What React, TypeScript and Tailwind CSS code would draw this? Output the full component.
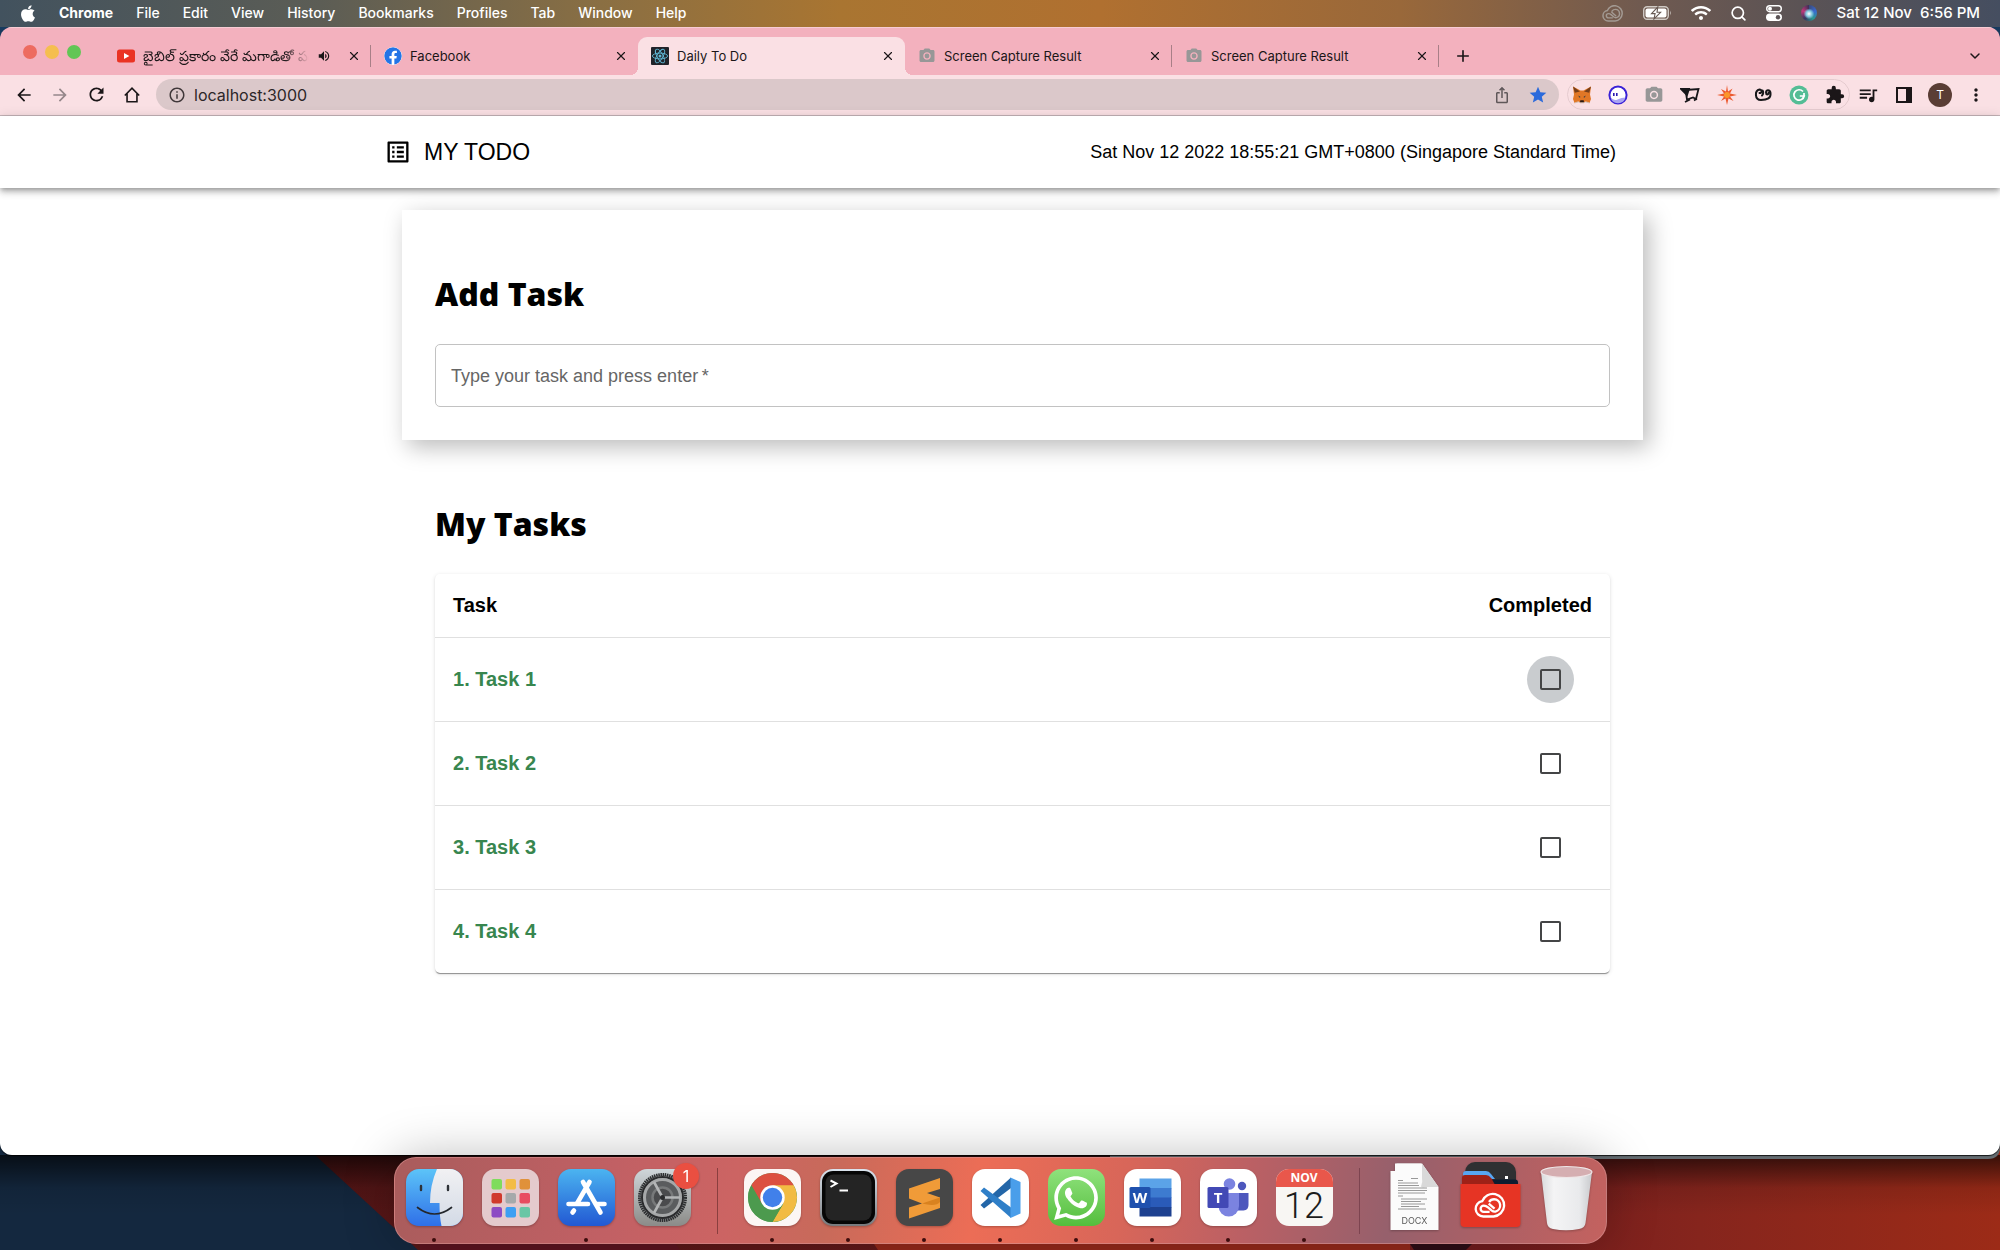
import { ReactNode, useState } from "react";
import { FaApple, FaFacebook, FaWhatsapp, FaWifi } from "react-icons/fa";
import {
  MdArrowBack,
  MdArrowForward,
  MdCameraAlt,
  MdExtension,
  MdInfoOutline,
  MdIosShare,
  MdListAlt,
  MdMoreVert,
  MdOutlineHome,
  MdQueueMusic,
  MdRefresh,
  MdStar,
  MdVolumeUp,
} from "react-icons/md";
import { ChevronDown, Plus, Search, X } from "lucide-react";

const menus = ["File", "Edit", "View", "History", "Bookmarks", "Profiles", "Tab", "Window", "Help"];

const tasks = ["Task 1", "Task 2", "Task 3", "Task 4"];

function CreativeCloud({ className }: { className?: string }) {
  return (
    <svg viewBox="0 0 36 28" fill="none" stroke="currentColor" strokeWidth="2.4" strokeLinecap="round" className={className}>
      <path d="M10 26.300 A8.600 8.600 0 0 1 8.800 9.200 A12.600 12.600 0 1 1 21.500 26.300 Z" />
      <path d="M17 21.200 H10.500 a3.500 3.500 0 0 1 0-7 c2.200 0 3.400 .8 4.800 2 l4.200 3.600 c1.400 1.100 2.600 1.300 4 1 a6.900 6.900 0 0 0 -1.500-13.600 c-2.600 0-4.400 1.200-5.600 3" />
      <path d="M16 12 l6.500 5.600" />
    </svg>
  );
}

function MenuBar() {
  return (
    <header className="flex h-[27px] items-center justify-between bg-[linear-gradient(to_right,#42525e_0%,#5c5d55_16%,#8a6f43_30%,#a97531_42%,#b07030_55%,#99683a_70%,#705a50_82%,#5b5355_90%,#454e60_100%)] px-5 pb-px font-[Inter,sans-serif] text-[14px] leading-5 font-medium text-white">
      <nav className="flex items-center gap-[23px]">
        <FaApple className="h-[19px] w-4" />
        <button className="font-bold">Chrome</button>
        {menus.map((menu) => (
          <button key={menu}>{menu}</button>
        ))}
      </nav>
      <div className="flex items-center gap-[19px]">
        <CreativeCloud className="h-[17px] w-[22px] text-[#a39a93]" />
        <svg viewBox="0 0 29 14" className="h-[14px] w-[29px]">
          <rect x="0.7" y="0.7" width="24.6" height="12.6" rx="3.5" fill="none" stroke="#cfc9c4" strokeWidth="1.4" />
          <rect x="2.5" y="2.5" width="21" height="9" rx="2" fill="#fff" />
          <path d="M27 4.5 q1.6 2.5 0 5z" fill="#cfc9c4" />
          <path d="M14.8 1 L8.5 7.6 h3.6 L11 13 L17.6 6.3 h-3.6 z" fill="#fff" stroke="#675953" strokeWidth="1.1" />
        </svg>
        <FaWifi className="h-[18px] w-5" />
        <Search className="size-[17px]" strokeWidth={2.4} />
        <svg viewBox="0 0 16 16" className="size-4">
          <rect x="0.7" y="0.7" width="14.6" height="6" rx="3" fill="none" stroke="#fff" strokeWidth="1.4" />
          <circle cx="4" cy="3.7" r="2" fill="#fff" />
          <rect x="0" y="8.6" width="16" height="7.4" rx="3.7" fill="#fff" />
          <circle cx="12" cy="12.3" r="2.2" fill="#5b5355" />
        </svg>
        <span className="size-4 rounded-full bg-[radial-gradient(circle_at_50%_55%,#fff_0,#7fc6dd_25%,transparent_45%),conic-gradient(#3b4a7a,#3a6ad0,#2b9a90,#35365f,#c0397a,#3b2f55)]" />
        <span className="text-[15px] whitespace-pre">Sat 12 Nov  6:56 PM</span>
      </div>
    </header>
  );
}

function CameraFavicon() {
  return <MdCameraAlt className="size-[18px] shrink-0 text-[#979797]" />;
}

function Tab({ icon, title, active, divider, playing }: { icon: ReactNode; title: string; active?: boolean; divider?: boolean; playing?: boolean }) {
  return (
    <div
      className={
        active
          ? "relative flex h-[38px] max-w-[267px] min-w-0 flex-1 items-center rounded-t-[9px] bg-[#fae0e4] pr-[10px] pl-[13px] before:absolute before:bottom-0 before:-left-2 before:size-2 before:bg-[radial-gradient(circle_at_0_0,transparent_8px,#fae0e4_8px)] after:absolute after:-right-2 after:bottom-0 after:size-2 after:bg-[radial-gradient(circle_at_100%_0,transparent_8px,#fae0e4_8px)]"
          : "relative flex h-[38px] max-w-[267px] min-w-0 flex-1 items-center pr-[10px] pl-[13px]"
      }
    >
      {icon}
      <span
        className={
          playing
            ? "ml-2 min-w-0 flex-1 overflow-hidden py-1 text-[14px] whitespace-nowrap [mask-image:linear-gradient(to_right,black_85%,transparent)]"
            : "ml-2 min-w-0 flex-1 truncate"
        }
      >
        {title}
      </span>
      {playing && <MdVolumeUp className="mr-4 ml-2 size-[14px] shrink-0" />}
      <button aria-label="Close tab">
        <X className="size-[14px]" strokeWidth={2} />
      </button>
      {divider && <span className="absolute right-0 h-[22px] w-px bg-[#a87f87]" />}
    </div>
  );
}

function TabStrip() {
  return (
    <div className="flex h-[48px] items-end bg-[#f3b1be] font-[Inter,'Noto_Sans',sans-serif] text-[13px] leading-5 text-[#1b1618] shadow-[inset_0_1px_0_#f7ccd4]">
      <div className="flex h-[46px] w-[104px] shrink-0 items-center gap-2 pl-[23px]">
        <span className="size-[14px] rounded-full bg-[#ed6b60]" />
        <span className="size-[14px] rounded-full bg-[#f5be4f]" />
        <span className="size-[14px] rounded-full bg-[#62c655]" />
      </div>
      <Tab
        icon={
          <svg viewBox="0 0 18 14" className="h-[14px] w-[18px] shrink-0">
            <rect width="18" height="13" y="0.5" rx="2.5" fill="#ea3323" />
            <path d="M7 4 L12.4 7 L7 10z" fill="#fff" />
          </svg>
        }
        title="బైబిల్ ప్రకారం వేరే మగాడితో పడ"
        playing
        divider
      />
      <Tab icon={<FaFacebook className="size-[18px] shrink-0 rounded-full bg-white text-[#2374e6]" />} title="Facebook" />
      <Tab
        active
        icon={
          <svg viewBox="0 0 18 18" className="size-[18px] shrink-0">
            <rect width="18" height="18" rx="1" fill="#20232a" />
            <g fill="none" stroke="#61b9d6" strokeWidth="0.9">
              <ellipse cx="9" cy="9" rx="7.6" ry="2.9" />
              <ellipse cx="9" cy="9" rx="7.6" ry="2.9" transform="rotate(60 9 9)" />
              <ellipse cx="9" cy="9" rx="7.6" ry="2.9" transform="rotate(120 9 9)" />
            </g>
            <circle cx="9" cy="9" r="1.5" fill="#61b9d6" />
          </svg>
        }
        title="Daily To Do"
      />
      <Tab icon={<CameraFavicon />} title="Screen Capture Result" divider />
      <Tab icon={<CameraFavicon />} title="Screen Capture Result" divider />
      <button aria-label="New tab" className="flex h-[38px] w-[48px] items-center justify-center">
        <Plus className="size-[18px]" strokeWidth={2.2} />
      </button>
      <button aria-label="Search tabs" className="mr-[17px] ml-auto flex h-[38px] items-center">
        <ChevronDown className="size-4" strokeWidth={2.2} />
      </button>
    </div>
  );
}

const toolButton = "flex h-[31px] w-9 items-center justify-center";

function Toolbar() {
  return (
    <div className="flex h-[41px] items-start border-b border-[#c6b5b9] bg-[#fae0e4] px-[6px] pt-1 font-[Inter,sans-serif] text-[#1b1618]">
      <button aria-label="Back" className={toolButton}><MdArrowBack className="size-5" /></button>
      <button aria-label="Forward" className={toolButton}><MdArrowForward className="size-5 text-[#95878a]" /></button>
      <button aria-label="Reload" className={toolButton}><MdRefresh className="size-[21px]" /></button>
      <button aria-label="Home" className={toolButton}>
        <svg viewBox="0 0 20 20" fill="none" stroke="currentColor" strokeWidth="1.800" className="size-[18px]">
          <path d="M2 10.500 L10 2.500 L18 10.500 M4.500 8.500 V17.500 H15.500 V8.500" />
        </svg>
      </button>
      <div className="mx-[6px] flex h-[31px] min-w-0 flex-1 items-center rounded-full bg-[#dbc8ca] pr-[11px] pl-3">
        <MdInfoOutline className="size-[18px] shrink-0 text-[#40383a]" />
        <input aria-label="Address" defaultValue="localhost:3000" className="ml-2 min-w-0 flex-1 bg-transparent text-[16px] leading-5 text-[#2c2628] outline-none" />
        <MdIosShare className="mr-[17px] size-[18px] text-[#5f5759]" />
        <MdStar className="size-5 text-[#2b6adb]" />
      </div>
      <div className="ml-[2px] flex h-[31px] w-[283px] items-center justify-between rounded-full border border-[#e5cbcf] px-1">
        <svg viewBox="0 0 20 20" className="size-5">
          <path d="M1 1.5 L8.5 5.5 h3 L19 1.5 l-1 8 1 4.500-1.500 4-4-1.200-2 1.200 h-3 l-2-1.200-4 1.200L1 14l1-4.500z" fill="#e17726" />
          <path d="M1 1.500 L8 6.500 L2.800 7.800zM19 1.500 L12 6.500 L17.200 7.800z" fill="#763e1a" />
          <path d="M6 10.500l2.300 1.300-.3 1.200zM14 10.500l-2.300 1.300.3 1.200z" fill="#233447" />
          <path d="M8.300 15.200h3.400l.3 2.600H8z" fill="#2b1a12" />
          <path d="M2.500 18l3.800-1.200 1.700 1H12l1.700-1 3.800 1.200" fill="none" stroke="#d5bfb2" />
        </svg>
        <svg viewBox="0 0 20 20" className="size-5">
          <circle cx="10" cy="10" r="8.600" fill="#fff" stroke="#3a22d6" strokeWidth="2" />
          <path d="M2.500 12 q3 4.500 7 2.500 t8-2 a7.700 7.700 0 0 1-15-.5z" fill="#a9a4f2" />
          <rect x="5" y="8" width="1.600" height="3" fill="#2b1bb0" />
          <rect x="8" y="8" width="1.600" height="3" fill="#2b1bb0" />
        </svg>
        <MdCameraAlt className="size-5 text-[#979797]" />
        <svg viewBox="0 0 20 18" className="h-[18px] w-5" fill="none" stroke="#17171a" strokeWidth="1.800">
          <path d="M6 4 L18.500 3 L16 13 L13 11.500 L7 13.500 L6 7" />
          <path d="M1 3 H9 L7 9z" fill="#17171a" />
          <path d="M5 16 L10 13.500 M14 14.500 l3-2" />
        </svg>
        <svg viewBox="0 0 20 20" className="size-5">
          <path d="M10 0 L11 6.500 L15.500 3.500 L13 8.500 L20 10 L13 11.500 L16.500 16 L11.500 13.500 L10 20 L8.500 13.500 L4 16 L7 11.500 L0 10 L7 8.500 L4 4 L9 6.500z" fill="#ec5a30" />
          <circle cx="10" cy="10" r="3" fill="#fb962b" />
        </svg>
        <svg viewBox="0 0 20 20" className="size-5" fill="none" stroke="#17171a" strokeWidth="2" strokeLinecap="round">
          <path d="M6.500 4.500 C1.500 5.500 1.500 15 8 15 S18 13 17.500 8 C17 4.500 13 4.500 13 7.500 C13 10 15.500 10 15.500 7.800 M6.500 4.500 C9.500 4.500 9 8.500 6.500 8 M9.500 5.500 C10.500 6.500 10.500 9 9 10.500" />
        </svg>
        <svg viewBox="0 0 20 20" className="size-5">
          <circle cx="10" cy="10" r="9.500" fill="#54bd95" />
          <path d="M14 6.500 A5.200 5.200 0 1 0 15.200 11 H10.800 M15 8 v3.200 l-1.800 3" fill="none" stroke="#fff" strokeWidth="1.700" />
        </svg>
        <MdExtension className="size-5" />
      </div>
      <button aria-label="Media" className={toolButton}><MdQueueMusic className="size-[22px]" /></button>
      <button aria-label="Side panel" className={toolButton}>
        <svg viewBox="0 0 16 16" className="size-4">
          <rect x="1" y="1" width="14" height="14" fill="none" stroke="currentColor" strokeWidth="2" />
          <rect x="10" y="1" width="5" height="14" fill="currentColor" />
        </svg>
      </button>
      <button aria-label="Profile" className={toolButton}>
        <span className="flex size-6 items-center justify-center rounded-full bg-[#5a3d35] text-[12px] leading-4 text-white">T</span>
      </button>
      <button aria-label="More" className={toolButton}><MdMoreVert className="size-5" /></button>
    </div>
  );
}

function TodoPage() {
  const [value, setValue] = useState("");
  const [done, setDone] = useState<number[]>([]);

  const toggle = (index: number) =>
    setDone(done.includes(index) ? done.filter((i) => i !== index) : [...done, index]);

  return (
    <div className="flex-1 bg-white font-['Liberation_Sans',Arial,sans-serif] text-[18px] leading-7 text-black">
      {/* App bar */}
      <div className="relative flex h-[72px] items-center shadow-[0_2px_5px_-1px_rgba(0,0,0,0.3),0_5px_6px_0_rgba(0,0,0,0.14),0_1px_12px_0_rgba(0,0,0,0.12)]">
        <div className="mx-auto flex w-full max-w-[1232px] items-center justify-between">
          <h1 className="flex items-center gap-3 text-[23px]">
            <MdListAlt className="size-7" />
            MY TODO
          </h1>
          <p>Sat Nov 12 2022 18:55:21 GMT+0800 (Singapore Standard Time)</p>
        </div>
      </div>

      <main className="mx-auto max-w-[1286px] pt-[22px] pl-[45px]">
        {/* New task */}
        <section className="bg-white px-[33px] pt-[60px] pb-[33px] shadow-[6px_7px_22px_rgba(0,0,0,0.27)]">
          <h2 className="mb-[26px] font-['Open_Sans',sans-serif] text-[32px] leading-12 font-extrabold">Add Task</h2>
          <div className="relative">
            <input
              id="task"
              required
              value={value}
              onChange={(e) => setValue(e.target.value)}
              className="block h-[63px] w-full rounded-[5px] border border-[#c2c2c2] px-4 outline-none"
            />
            {!value && (
              <label htmlFor="task" className="pointer-events-none absolute inset-y-0 left-4 flex items-center text-[#666]">
                Type your task and press enter&#8201;*
              </label>
            )}
          </div>
        </section>

        {/* Task list */}
        <section className="px-[33px] pt-[60px]">
          <h2 className="mb-[26px] font-['Open_Sans',sans-serif] text-[32px] leading-12 font-extrabold">My Tasks</h2>
          <div className="rounded-[5px] shadow-[0_2px_1px_-1px_rgba(0,0,0,0.3),0_1px_1px_0_rgba(0,0,0,0.14),0_1px_4px_0_rgba(0,0,0,0.12)]">
            <table className="w-full text-[20px] font-bold">
              <thead>
                <tr className="h-[63px] border-b border-[#e0e0e0]">
                  <th className="pl-[18px] text-left">Task</th>
                  <th className="pr-[18px] text-right">Completed</th>
                </tr>
              </thead>
              <tbody>
                {tasks.map((task, index) => (
                  <tr key={task} className="h-[84px] border-b border-[#e0e0e0] last:border-b-0">
                    <td className="pl-[18px] text-[#38864f]">
                      <label htmlFor={`done-${index}`}>
                        {index + 1}. {task}
                      </label>
                    </td>
                    <td className="pr-[36px]">
                      <span
                        className={
                          index === 0
                            ? "ml-auto flex size-[47px] items-center justify-center rounded-full bg-[#c9cccf]"
                            : "ml-auto flex size-[47px] items-center justify-center rounded-full"
                        }
                      >
                        <input
                          id={`done-${index}`}
                          type="checkbox"
                          checked={done.includes(index)}
                          onChange={() => toggle(index)}
                          className="size-[21px] appearance-none rounded-[2px] border-2 border-[#444546] checked:bg-[#444546]"
                        />
                      </span>
                    </td>
                  </tr>
                ))}
              </tbody>
            </table>
          </div>
        </section>
      </main>
    </div>
  );
}

function DockItem({ label, running, children }: { label: string; running?: boolean; children: ReactNode }) {
  return (
    <button aria-label={label} className="flex flex-col items-center pt-[11px]">
      {children}
      {running && <span className="mt-3 size-1 rounded-full bg-[#3d0c0c]" />}
    </button>
  );
}

const dockIcon = "size-[57px] overflow-visible drop-shadow-[0_1px_1px_rgba(0,0,0,0.25)]";

const launchpadColors = [
  "#7fdc5c", "#f3bc45", "#e0913a",
  "#d0392c", "#a5a9ab", "#e84c60",
  "#8d4bc4", "#3d9ff3", "#68c6a5",
];

function Dock() {
  return (
    <div className="relative flex h-[87px] items-start gap-[19px] rounded-[22px] border border-[#d58f8f]/60 bg-[linear-gradient(100deg,#a95c5c_0%,#c16064_18%,#cc6463_28%,#c86a5a_36%,#ec6d56_48%,#d86659_60%,#bb6064_70%,#96606c_82%,#b06064_92%,#c4625f_100%)] px-[11px] shadow-[0_0_50px_rgba(0,0,0,0.27)]">
      <DockItem label="Finder" running>
        <svg viewBox="0 0 57 57" className={dockIcon}>
          <defs>
            <linearGradient id="finder" x2="0" y2="1"><stop stopColor="#5cc4f8" /><stop offset="1" stopColor="#2f6fe8" /></linearGradient>
            <linearGradient id="face" x2="0" y2="1"><stop stopColor="#f1f1f3" /><stop offset="1" stopColor="#d3dae6" /></linearGradient>
          </defs>
          <rect width="57" height="57" rx="13" fill="url(#finder)" />
          <path d="M31 0 H44 a13 13 0 0 1 13 13 V44 a13 13 0 0 1-13 13 H35.500 q-2-9-2-23 H24 q0-18 7-34z" fill="url(#face)" />
          <path d="M15 17v4M42 17v4" stroke="#2e3238" strokeWidth="2.400" strokeLinecap="round" />
          <path d="M11.500 38.500 q17 13 34 0" fill="none" stroke="#24272c" strokeWidth="1.700" strokeLinecap="round" />
        </svg>
      </DockItem>
      <DockItem label="Launchpad">
        <svg viewBox="0 0 57 57" className={dockIcon}>
          <rect width="57" height="57" rx="13" fill="#e4cacd" />
          {launchpadColors.map((color, i) => (
            <rect key={color} x={9.5 + (i % 3) * 14} y={10 + Math.floor(i / 3) * 14} width="10.500" height="10.500" rx="2" fill={color} />
          ))}
        </svg>
      </DockItem>
      <DockItem label="App Store" running>
        <svg viewBox="0 0 57 57" className={dockIcon}>
          <defs>
            <linearGradient id="store" x2="0" y2="1"><stop stopColor="#4bb4f0" /><stop offset="1" stopColor="#2258d3" /></linearGradient>
          </defs>
          <rect width="57" height="57" rx="13" fill="url(#store)" />
          <g stroke="#fff" strokeWidth="4.600" strokeLinecap="round">
            <path d="M31.500 13 L19 34.500M16 41.500 L14.500 43.500M25 13 L42.500 43.500" />
            <path d="M10.500 35 H30M38 35 H46.500" />
          </g>
        </svg>
      </DockItem>
      <DockItem label="System Preferences">
        <svg viewBox="0 0 57 57" className={dockIcon}>
          <defs>
            <linearGradient id="prefs" x2="0" y2="1"><stop stopColor="#cfd6da" /><stop offset="1" stopColor="#8b8b88" /></linearGradient>
          </defs>
          <rect width="57" height="57" rx="13" fill="url(#prefs)" />
          <circle cx="28.500" cy="28.500" r="23" fill="#8e9092" stroke="#2b2d2f" strokeWidth="3" strokeDasharray="1.500 0.700" />
          <circle cx="28.500" cy="28.500" r="20.500" fill="#5a5c5e" stroke="#2a2b2d" strokeWidth="2" />
          <circle cx="28.500" cy="28.500" r="18" fill="none" stroke="#a6a8a9" strokeWidth="3" />
          <circle cx="28.500" cy="28.500" r="10" fill="#4a4b4d" stroke="#77797a" strokeWidth="2.500" />
          <path d="M28.500 28.500 H46M28.500 28.500 L20 13M28.500 28.500 L20 44" stroke="#b3b5b6" strokeWidth="2.600" />
          <circle cx="28.500" cy="28.500" r="2.500" fill="#2a2b2d" />
          <circle cx="52" cy="7" r="13" fill="#ea4f41" />
          <text x="52" y="13" textAnchor="middle" fontSize="16" fill="#fff" fontFamily="Inter, sans-serif">1</text>
        </svg>
      </DockItem>
      <span className="flex w-[15px] justify-center pt-[10px]"><span className="h-[66px] w-px bg-[#8a3f3f]" /></span>
      <DockItem label="Chrome" running>
        <svg viewBox="0 0 57 57" className={dockIcon}>
          <rect width="57" height="57" rx="13" fill="#fcf6f4" />
          <circle cx="28.500" cy="28.500" r="24.500" fill="#4c9a4e" />
          <path d="M28.500 28.500 L7.300 16.200 A24.500 24.500 0 0 1 49.700 16.200z" fill="#dc5040" />
          <path d="M28.500 16.200 H49.700 A24.500 24.500 0 0 1 28.500 53 L39.200 34.700z" fill="#f2bb43" />
          <path d="M7.300 16.200 L17.900 34.700 L28.500 28.500 V16.200z" fill="#dc5040" />
          <path d="M7.300 16.200 L17.900 34.700 L28.500 40 L39.200 34.700 L28.500 53 A24.500 24.500 0 0 1 7.300 16.200z" fill="#4c9a4e" />
          <circle cx="28.500" cy="28.500" r="12.200" fill="#fff" />
          <circle cx="28.500" cy="28.500" r="9.700" fill="#4180ea" />
        </svg>
      </DockItem>
      <DockItem label="Terminal" running>
        <svg viewBox="0 0 57 57" className={dockIcon}>
          <defs>
            <linearGradient id="bezel" x2="0" y2="1"><stop stopColor="#dbe4ee" /><stop offset="1" stopColor="#77797c" /></linearGradient>
          </defs>
          <rect width="57" height="57" rx="13" fill="url(#bezel)" />
          <rect x="2" y="2" width="53" height="53" rx="11" fill="#060606" />
          <rect x="5.500" y="5.500" width="46" height="46" rx="8" fill="#242424" />
          <path d="M10.500 11.500 L16.500 14.500 L10.500 18M19.500 21.500 H28" fill="none" stroke="#fff" strokeWidth="2" />
        </svg>
      </DockItem>
      <DockItem label="Sublime Text" running>
        <svg viewBox="0 0 57 57" className={dockIcon}>
          <rect width="57" height="57" rx="13" fill="#474747" />
          <path d="M13 19.500 L44 9 V20 L31 24 L44 28.500 V39 L13 49.500 V38.500 L26 34.500 L13 29.500z" fill="#f09b38" />
          <path d="M26 34.500 L44 28.500 L44 33 Q40 38 26 34.500z" fill="#d9821f" />
        </svg>
      </DockItem>
      <DockItem label="Visual Studio Code" running>
        <svg viewBox="0 0 57 57" className={dockIcon}>
          <rect width="57" height="57" rx="13" fill="#fff" />
          <path d="M8.500 36 L12 39.500 L39 19 V8.500z" fill="#2366a8" />
          <path d="M8.500 22 L12 18.500 L39 38.500 V49z" fill="#2f7fc8" />
          <path d="M38.500 8.500 L48.500 13 V44.500 L38.500 49z" fill="#4a9eea" />
        </svg>
      </DockItem>
      <DockItem label="WhatsApp" running>
        <span className="flex size-[57px] items-center justify-center rounded-[13px] bg-linear-to-b from-[#8fe27c] to-[#54be3c] text-white">
          <FaWhatsapp className="size-[50px]" />
        </span>
      </DockItem>
      <DockItem label="Word" running>
        <svg viewBox="0 0 57 57" className={dockIcon}>
          <rect width="57" height="57" rx="13" fill="#fff" />
          <rect x="15.500" y="9.500" width="32" height="10" fill="#5ba3e8" />
          <rect x="15.500" y="19" width="32" height="10" fill="#3d7bd0" />
          <rect x="15.500" y="28.500" width="32" height="10" fill="#2a5bb9" />
          <rect x="15.500" y="38" width="32" height="9.500" fill="#1d4190" />
          <rect x="5.500" y="18" width="21" height="21" rx="1.500" fill="#1f51ae" />
          <text x="16" y="34" textAnchor="middle" fontSize="15" fontWeight="700" fill="#fff" fontFamily="Open Sans, sans-serif">W</text>
        </svg>
      </DockItem>
      <DockItem label="Teams" running>
        <svg viewBox="0 0 57 57" className={dockIcon}>
          <rect width="57" height="57" rx="13" fill="#fff" />
          <circle cx="42" cy="17" r="4.200" fill="#4d57bd" />
          <path d="M36 24 H48.500 V36 q0 5-5 5.500 H36z" fill="#4d57bd" />
          <circle cx="29.500" cy="15" r="5.800" fill="#7b83e0" />
          <path d="M18.500 24 H39 V37 a10.200 10.500 0 0 1-20.500 0z" fill="#7b83e0" />
          <rect x="7.500" y="18" width="21" height="21" rx="1.500" fill="#4249b5" />
          <text x="18" y="34" textAnchor="middle" fontSize="15" fontWeight="700" fill="#fff" fontFamily="Open Sans, sans-serif">T</text>
        </svg>
      </DockItem>
      <DockItem label="Calendar" running>
        <span className="block size-[57px] overflow-hidden rounded-[13px] bg-[#f8f6f3] text-center">
          <span className="block h-[18px] bg-[#e9574b] font-['Open_Sans',sans-serif] text-[12px] leading-[18px] font-bold text-white">NOV</span>
          <span className="block font-[Roboto,sans-serif] text-[36px] leading-[38px] font-light text-[#1c1c1c]">12</span>
        </span>
      </DockItem>
      <span className="flex w-[15px] justify-center pt-[10px]"><span className="h-[66px] w-px bg-[#7d4450]" /></span>
      <DockItem label="Document">
        <svg viewBox="0 0 57 57" className={dockIcon}>
          <path d="M10.500-5.500 H35 L50 16 V60 H10.500z" fill="#e2e2e2" />
          <path d="M4.500 2 H9 V-5.500 H36 L52.500 18 V61 H4.500z" fill="#fbfbfb" />
          <path d="M36-5.500 L52.500 18 H40 q-4 1-5-.5 q2-4 1-9z" fill="#d9d9d9" />
          <g stroke="#8d8d8d" strokeWidth="0.900">
            <path d="M25 9.500 h7M12 11.500 h5M12 14 h20M12 16.500 h21M12 19 h29M12 21.500 h29M12 24 h27M12 27 h5M15 30 h26M15 32.500 h20M15 35 h24M15 37.500 h18M12 40 h28" />
          </g>
          <text x="28.500" y="55" textAnchor="middle" fontSize="9" fill="#5a5a5a" fontFamily="Inter, sans-serif">DOCX</text>
        </svg>
      </DockItem>
      <DockItem label="Creative Cloud Files">
        <svg viewBox="0 0 57 57" className={dockIcon}>
          <rect x="3" y="-7" width="51" height="40" rx="10" fill="#2f3032" />
          <path d="M1 5 q0-3 3-3 H24 q3 0 5 3 l4 5 H1z" fill="#57a6f2" />
          <path d="M0 9 q0-3 3-3 H24 q3 0 5 3 l6 6 H0z" fill="#9f2117" />
          <path d="M30 10.500 H53 q3 0 3 3 v4 H34z" fill="#0d1c30" />
          <rect x="43" y="7" width="3" height="3" fill="#fff" />
          <path d="M-1.500 15 H58.500 V54 q0 4-4 4 H2.500 q-4 0-4-4z" fill="#e63424" />
          <svg x="11" y="22" width="35" height="27" viewBox="-1 -2 38 30" fill="none" stroke="#fff" strokeWidth="2.600">
            <path d="M10 26.300 A8.600 8.600 0 0 1 8.800 9.200 A12.600 12.600 0 1 1 21.500 26.300 Z" />
            <path d="M17 21.200 H10.500 a3.500 3.500 0 0 1 0-7 c2.200 0 3.400 .8 4.800 2 l4.200 3.600 c1.400 1.100 2.600 1.300 4 1 a6.900 6.900 0 0 0 -1.500-13.600 c-2.600 0-4.400 1.200-5.600 3" />
            <path d="M16 12 l6.500 5.600" />
          </svg>
        </svg>
      </DockItem>
      <DockItem label="Trash">
        <svg viewBox="0 0 57 57" className={dockIcon}>
          <defs>
            <linearGradient id="bin"><stop stopColor="#d9dadc" /><stop offset=".25" stopColor="#f4f4f5" /><stop offset=".75" stopColor="#e9eaec" /><stop offset="1" stopColor="#c9cacd" /></linearGradient>
          </defs>
          <path d="M3 3 L9 54 q.5 5 6 6 q13 2.500 26 0 q6-1 6.500-6 L54 3z" fill="url(#bin)" />
          <ellipse cx="28.500" cy="3" rx="25.500" ry="5.500" fill="#d5aeb1" stroke="#efe6e7" strokeWidth="1.200" />
        </svg>
      </DockItem>
    </div>
  );
}

function Wallpaper() {
  return (
    <svg viewBox="0 0 2000 107" preserveAspectRatio="none" className="absolute bottom-0 left-0 h-[107px] w-full">
      <defs>
        <linearGradient id="warm"><stop stopColor="#4c1414" /><stop offset=".75" stopColor="#741c1e" /><stop offset=".85" stopColor="#86251d" /><stop offset="1" stopColor="#9c2b17" /></linearGradient>
        <linearGradient id="fade" x2="0" y2="1"><stop stopColor="#000" stopOpacity=".65" /><stop offset=".55" stopColor="#000" stopOpacity=".1" /><stop offset="1" stopColor="#000" stopOpacity="0" /></linearGradient>
      </defs>
      <rect width="2000" height="107" fill="url(#warm)" />
      <path d="M0 0 H302 L418 107 H0z" fill="#14283f" />
      <path d="M420 101 H676 L680 107 H420z" fill="#5e1420" />
      <path d="M874 101 H1410 V107 H878z" fill="#97291b" />
      <path d="M1410 101 H1472 L1466 107 H1414z" fill="#2e0d16" />
      <rect y="12" width="2000" height="60" fill="url(#fade)" />
      <path d="M1110 0 H2000 V4 q0 12-12 12 H1110z" fill="#646c71" />
    </svg>
  );
}

export default function App() {
  return (
    <div className="relative flex min-h-screen flex-col bg-[#173a5e]">
      <MenuBar />
      <Wallpaper />
      <div className="relative flex flex-1 flex-col overflow-hidden rounded-xl shadow-[0_1px_1px_rgba(0,0,0,0.8)]">
        <TabStrip />
        <Toolbar />
        <TodoPage />
      </div>
      <footer className="relative flex h-[95px] items-start justify-center pt-[2px]">
        <Dock />
      </footer>
    </div>
  );
}
